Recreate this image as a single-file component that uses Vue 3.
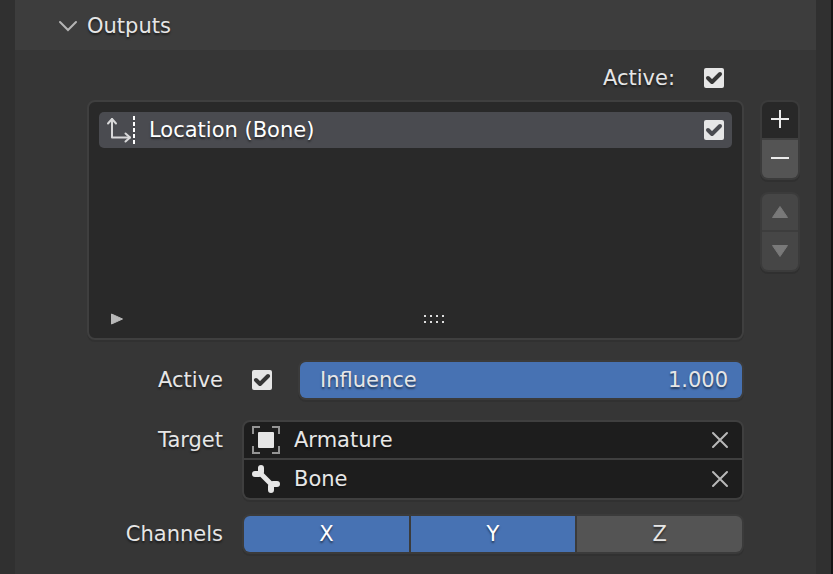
<script setup>
import { ref, reactive } from 'vue'

const open = ref(true)
const allActive = ref(true)
const active = ref(true)
const influence = ref(1)
const outputs = reactive([{ name: 'Location (Bone)', enabled: true }])
const target = ref('Armature')
const bone = ref('Bone')
const channels = reactive([
  { name: 'X', on: true },
  { name: 'Y', on: true },
  { name: 'Z', on: false },
])
</script>

<template>
  <main class="editor">
    <section class="panel">
      <h2 class="panel-head">
        <button class="head-button" :aria-expanded="open" @click="open = !open">
          <svg class="chevron" width="20" height="12" viewBox="0 0 20 12" aria-hidden="true">
            <path d="M2 2 10 10 18 2" fill="none" stroke="#b5b5b5" stroke-width="2" stroke-linecap="round" />
          </svg>
          <span>Outputs</span>
        </button>
      </h2>

      <div v-if="open" class="panel-body">
        <div class="main">
          <div class="all-row">
            <label for="all-active">Active:</label>
            <span class="check">
              <input id="all-active" v-model="allActive" type="checkbox" />
              <svg v-if="allActive" viewBox="0 0 20 20" aria-hidden="true"><path d="M4 10 8 14 16 6" /></svg>
            </span>
          </div>

          <div class="list">
            <ul class="items">
              <li v-for="item in outputs" :key="item.name" class="item">
                <svg width="30" height="30" viewBox="0 0 30 30" aria-hidden="true">
                  <g fill="none" stroke="#d8d8d9" stroke-width="2" stroke-linecap="round" stroke-linejoin="round">
                    <path d="M6 4V22.5H24" />
                    <path d="M2 8.5 6 4 10 8.5M19.5 18.5 24 22.5 19.5 26.5" />
                  </g>
                  <path d="M28 1V29" fill="none" stroke="#fff" stroke-width="2" stroke-dasharray="4 2" />
                </svg>
                <label class="item-name" for="item-enabled">{{ item.name }}</label>
                <span class="check in-item">
                  <input id="item-enabled" v-model="item.enabled" type="checkbox" />
                  <svg v-if="item.enabled" viewBox="0 0 20 20" aria-hidden="true"><path d="M4 10 8 14 16 6" /></svg>
                </span>
              </li>
            </ul>
            <div class="list-foot">
              <button class="filter" aria-label="Show filter">
                <svg width="14" height="12" viewBox="0 0 14 12" aria-hidden="true">
                  <path d="M1.5 1V11L12.5 6Z" fill="#b9b9b9" stroke="#b9b9b9" stroke-linejoin="round" />
                </svg>
              </button>
              <svg class="grip" width="22" height="8" viewBox="0 0 22 8" aria-hidden="true">
                <path d="M0 1H22M0 7H22" stroke="#dedede" stroke-width="2" stroke-dasharray="2 4" />
              </svg>
            </div>
          </div>
        </div>

        <div class="side">
          <div class="stack">
            <button class="add" aria-label="Add output">
              <svg width="18" height="20" viewBox="0 0 18 20" aria-hidden="true">
                <path d="M9 0V18M0 9H18" stroke="#ececec" stroke-width="2" />
              </svg>
            </button>
            <button class="remove" aria-label="Remove output">
              <svg width="18" height="20" viewBox="0 0 18 20" aria-hidden="true">
                <path d="M0 9H18" stroke="#ececec" stroke-width="2" />
              </svg>
            </button>
          </div>
          <div class="stack">
            <button class="move" aria-label="Move up" disabled>
              <svg width="18" height="14" viewBox="0 0 18 14" aria-hidden="true">
                <path d="M9 1.5 16.5 12.5H1.5Z" fill="#797979" stroke="#797979" stroke-linejoin="round" />
              </svg>
            </button>
            <button class="move down" aria-label="Move down" disabled>
              <svg width="18" height="14" viewBox="0 0 18 14" aria-hidden="true">
                <path d="M9 12.5 16.5 1.5H1.5Z" fill="#797979" stroke="#797979" stroke-linejoin="round" />
              </svg>
            </button>
          </div>
        </div>

        <div class="form">
          <div class="group">
            <div class="row">
              <label class="row-label" for="active">Active</label>
              <div class="influence-row">
                <span class="check">
                  <input id="active" v-model="active" type="checkbox" />
                  <svg v-if="active" viewBox="0 0 20 20" aria-hidden="true"><path d="M4 10 8 14 16 6" /></svg>
                </span>
                <div class="slider">
                  <div class="slider-fill" :style="{ width: influence * 100 + '%' }"></div>
                  <label class="slider-text" for="influence">Influence</label>
                  <output class="slider-text" for="influence">{{ Number(influence).toFixed(3) }}</output>
                  <input id="influence" v-model="influence" class="slider-input" type="range" min="0" max="1" step="0.001" />
                </div>
              </div>
            </div>
          </div>

          <div class="group">
            <div class="row">
              <label class="row-label" for="target">Target</label>
              <div class="fields">
                <div class="field">
                  <svg width="28" height="28" viewBox="0 0 28 28" aria-hidden="true">
                    <path d="M1 8V1H8M20 1H27V8M27 20V27H20M8 27H1V20" fill="none" stroke="#949494" stroke-width="2" />
                    <rect x="6" y="6" width="16" height="16" rx="1" fill="#e6e6e6" />
                  </svg>
                  <input id="target" v-model="target" type="text" />
                  <button class="clear" aria-label="Clear target" @click="target = ''">
                    <svg width="18" height="18" viewBox="0 0 18 18" aria-hidden="true">
                      <path d="M2 2 16 16M16 2 2 16" stroke="#b8b8b8" stroke-width="2" stroke-linecap="round" />
                    </svg>
                  </button>
                </div>
                <div class="field">
                  <svg width="28" height="28" viewBox="0 0 28 28" aria-hidden="true">
                    <path d="M7 7 21 21" stroke="#e6e6e6" stroke-width="5" />
                    <path d="M9 3V7L7 9H3M19 25V21L21 19H25" fill="none" stroke="#e6e6e6" stroke-width="6" stroke-linecap="round" stroke-linejoin="round" />
                  </svg>
                  <input v-model="bone" type="text" aria-label="Bone" />
                  <button class="clear" aria-label="Clear bone" @click="bone = ''">
                    <svg width="18" height="18" viewBox="0 0 18 18" aria-hidden="true">
                      <path d="M2 2 16 16M16 2 2 16" stroke="#b8b8b8" stroke-width="2" stroke-linecap="round" />
                    </svg>
                  </button>
                </div>
              </div>
            </div>

            <div class="row" role="group" aria-labelledby="channels-label">
              <span id="channels-label" class="row-label">Channels</span>
              <div class="channels">
                <button
                  v-for="channel in channels"
                  :key="channel.name"
                  class="channel"
                  :class="{ on: channel.on }"
                  :aria-pressed="channel.on"
                  @click="channel.on = !channel.on"
                >{{ channel.name }}</button>
              </div>
            </div>
          </div>
        </div>
      </div>
    </section>
  </main>
</template>

<style>
body {
  margin: 0;
  background: #303030;
}
</style>

<style scoped>
.editor {
  box-sizing: border-box;
  min-height: 100vh;
  padding: 0 15px;
  border-right: 2px solid #161616;
  display: flex;
  background: #303030;
  color: #e6e6e6;
  font: 21px/36px "DejaVu Sans", sans-serif;
  text-shadow: 0 2px 2px rgba(0, 0, 0, 0.5);
}
button,
input {
  box-sizing: border-box;
  margin: 0;
  padding: 0;
  border: 0;
  background: none;
  color: inherit;
  font: inherit;
  text-shadow: inherit;
}
svg {
  display: block;
  flex: none;
}
.panel {
  flex: 1;
  background: #363636;
}
.panel-head {
  margin: 0;
  padding: 8px 43px 6px;
  background: #3d3d3d;
  font: inherit;
}
.head-button {
  display: flex;
  align-items: center;
  gap: 9px;
}
.panel-body {
  display: grid;
  grid-template-columns: 1fr 40px;
  column-gap: 16px;
  row-gap: 20px;
  padding: 10px 16px 20px 72px;
}
.all-row {
  display: flex;
  align-items: center;
  justify-content: flex-end;
  gap: 29px;
  padding: 0 20px 4px 0;
}
.check {
  position: relative;
  width: 20px;
  height: 20px;
  flex: none;
}
.check input {
  display: block;
  width: 20px;
  height: 20px;
  appearance: none;
  border-radius: 2px;
  background: #e6e6e6;
}
.check svg {
  position: absolute;
  inset: 0;
  pointer-events: none;
}
.check path {
  fill: none;
  stroke: #363636;
  stroke-width: 4;
  stroke-linecap: round;
  stroke-linejoin: round;
}
.in-item path {
  stroke: #4a4b50;
}
.list {
  display: flex;
  flex-direction: column;
  justify-content: space-between;
  min-height: 220px;
  padding: 10px 10px 6px;
  border: 2px solid #3f3f3f;
  border-radius: 8px;
  background: #292929;
  box-shadow: 0 2px 0 #313131;
}
.items {
  margin: 0;
  padding: 0;
  list-style: none;
}
.item {
  display: flex;
  align-items: center;
  padding: 0 8px 0 7px;
  border-radius: 5px;
  background: #4a4b50;
  color: #fff;
}
.item-name {
  flex: 1;
  padding-left: 13px;
}
.list-foot {
  display: grid;
  grid-template-columns: 1fr auto 1fr;
  align-items: center;
  height: 26px;
}
.filter {
  justify-self: start;
  padding-left: 11px;
}
.grip {
  margin-left: 38px;
}
.side {
  display: flex;
  flex-direction: column;
  gap: 12px;
  padding-top: 40px;
}
.stack {
  display: grid;
  grid-template-rows: 36px 38px;
  gap: 2px;
  overflow: hidden;
  border: 2px solid #3b3b3b;
  border-radius: 8px;
  background: #404040;
  box-shadow: 0 2px 0 #303030;
}
.stack button {
  display: grid;
  place-items: center;
}
.add {
  background: #282828;
}
.remove {
  background: #545454;
}
.stack .move {
  background: #464646;
}
.stack .down {
  box-shadow: 0 -2px 0 #3d3d3d;
}
.form {
  grid-column: 1;
}
.form,
.group {
  display: grid;
  gap: 20px;
}
.group {
  gap: 14px;
}
.row {
  display: grid;
  grid-template-columns: 136px 1fr;
  align-items: start;
  column-gap: 19px;
}
.row-label {
  padding-top: 2px;
  text-align: right;
}
.influence-row {
  display: flex;
  align-items: center;
  gap: 26px;
  padding-left: 10px;
}
.slider {
  position: relative;
  flex: 1;
  display: flex;
  justify-content: space-between;
  padding: 0 14px 0 20px;
  overflow: hidden;
  border: 2px solid #3b3b3b;
  border-radius: 8px;
  background: #545454;
  background-clip: padding-box;
}
.slider-fill {
  position: absolute;
  inset: 0 auto 0 0;
  background: #4772b3;
}
.slider-text {
  position: relative;
}
.slider-input {
  position: absolute;
  inset: 0;
  width: 100%;
  height: 100%;
  opacity: 0;
}
.fields {
  overflow: hidden;
  border: 2px solid #3f3f3f;
  border-radius: 8px;
  background: #3f3f3f;
  display: grid;
  grid-template-rows: 36px 38px;
  gap: 2px;
}
.field {
  display: flex;
  align-items: center;
  gap: 14px;
  padding: 0 13px 0 8px;
  background: #1d1d1d;
}
.field input {
  flex: 1;
  min-width: 0;
  height: 36px;
}
.channels {
  display: grid;
  grid-template-columns: repeat(3, 1fr);
  gap: 2px;
  overflow: hidden;
  border: 2px solid #3b3b3b;
  border-radius: 8px;
  background: #3b3b3b;
}
.channel {
  height: 36px;
  background: #545454;
}
.channel.on {
  background: #4772b3;
  color: #fff;
}
.slider,
.fields,
.channels {
  box-shadow: 0 2px 0 #313131;
}
</style>
